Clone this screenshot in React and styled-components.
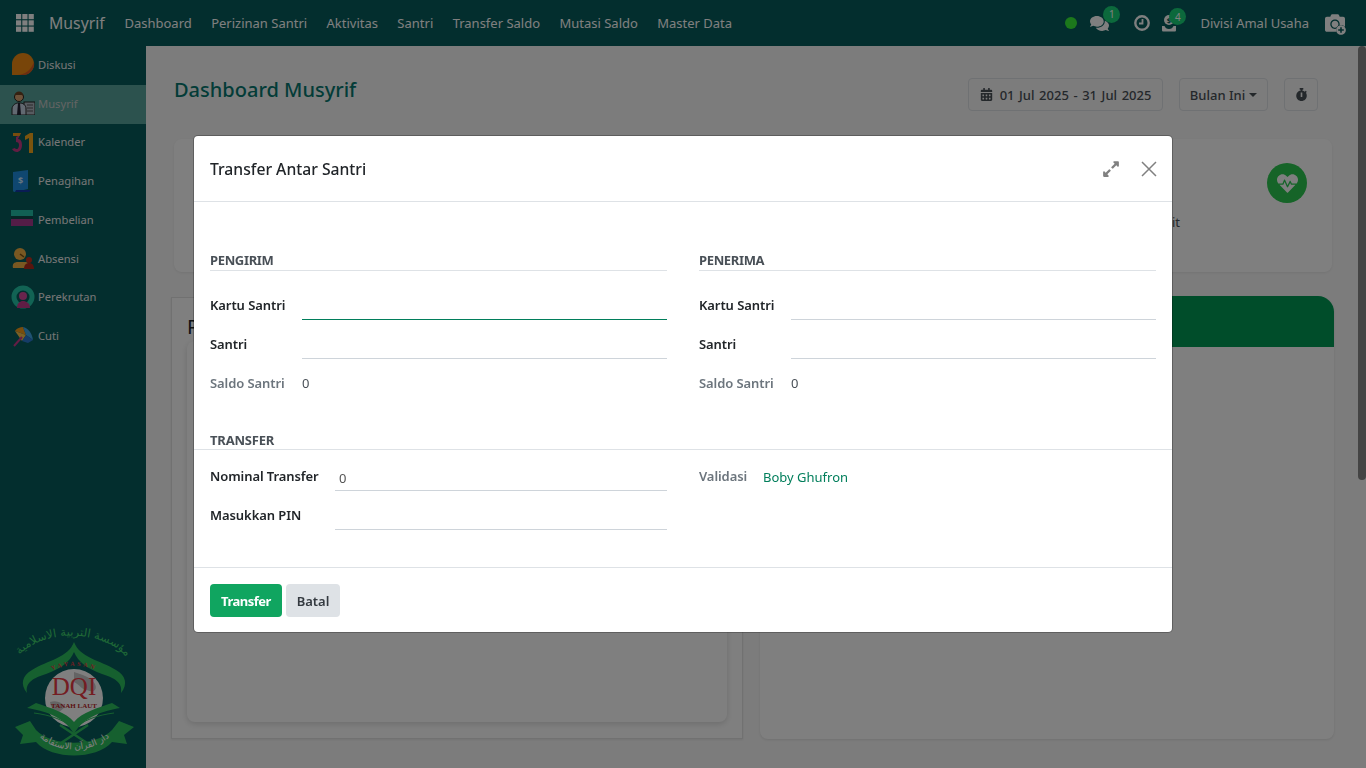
import React from 'react';
import styled, { createGlobalStyle } from 'styled-components';
import { FaComments, FaCamera, FaCalendarAlt, FaStopwatch, FaHeartbeat, FaExpandAlt, FaPlusCircle } from 'react-icons/fa';

const Global = createGlobalStyle`
  html, body { margin: 0; padding: 0; height: 100%; overflow: hidden; }
  body { font-family: "Noto Sans", "Open Sans", sans-serif; font-size: 13px; color: #212529; background: #f9f9f9; }
  * { box-sizing: border-box; }
`;
const Shell = styled.div`display: flex; flex-direction: column; height: 100vh;`;
const Navbar = styled.header`
  height: 46px; flex: none; background: #065c5c; color: #fff; display: flex; align-items: center; padding: 0 21px 0 16px;
`;
const Brand = styled.span`font-size: 15.8px; margin: 0 10px 0 15px;`;
const NavLink = styled.a`font-size: 13px; padding: 0 9.7px; color: #fff;`;
const NavRight = styled.div`margin-left: auto; display: flex; align-items: center; color: #fff;`;
const Dot = styled.span`width: 12px; height: 12px; border-radius: 50%; background: #38f038; margin-right: 13px;`;
const IconBadge = styled.span`
  position: relative; display: flex; margin-right: ${p => p.$mr}px; font-size: ${p => p.$size || 18}px;
`;
const Badge = styled.span`
  position: absolute; top: ${p => p.$top}px; left: ${p => p.$left}px; width: 17px; height: 17px; border-radius: 50%;
  background: #18d278; color: #fff; font-size: 10px; display: flex; align-items: center; justify-content: center;
`;
const Division = styled.span`font-size: 13px; margin-right: 16px;`;
const CameraWrap = styled.span`position: relative; display: flex; font-size: 20px;`;
const PlusMark = styled.span`
  position: absolute; right: -1px; bottom: -2px; display: flex; font-size: 10px; color: #fff;
  background: #065c5c; border-radius: 50%;
`;
const Below = styled.div`flex: 1; display: flex; min-height: 0;`;
const Sidebar = styled.aside`width: 146px; flex: none; background: #065c5c; display: flex; flex-direction: column;`;
const SideItem = styled.a`
  height: 38.75px; flex: none; display: flex; align-items: center; padding: 0 0 2px 11px; gap: 3px;
  font-size: 11.2px; color: #ececec; background: ${p => p.$active ? '#58a59c' : 'transparent'};
  ${p => p.$active ? 'color:#c8c8c8;' : ''}
`;
const SideIcon = styled.svg`width: 24px; height: 24px; flex: none;`;
const Logo = styled.svg`width: 146px; height: 158px; margin-top: auto; flex: none;`;
const Main = styled.main`flex: 1; min-width: 0; overflow: hidden;`;
const ScrollTrack = styled.div`width: 8px; flex: none; background: #f9f9f9;`;
const ScrollThumb = styled.div`height: 434px; background: #888; border-radius: 4px;`;
const Content = styled.div`padding: 32px 24px 0 25px;`;
const TopRow = styled.div`display: flex; align-items: center; height: 33px; padding: 0 16px 0 3px; margin-bottom: 28px;`;
const PageTitle = styled.h1`flex: 1; margin: 0 0 10px; font-size: 20px; font-weight: 500; color: #067870;`;
const ToolBtn = styled.button`
  height: 33px; padding: 0; margin-left: ${p => p.$ml || 0}px; display: flex; align-items: center; justify-content: center; gap: ${p => p.$gap || 4}px;
  border: 1px solid #dee2e6; border-radius: 4px; background: transparent; font: 500 13px "Noto Sans", sans-serif; color: #495057;
  white-space: nowrap; word-spacing: ${p => p.$ws || 0}px; width: ${p => p.$w}px; flex: none;
`;
const Caret = styled.span`width: 0; height: 0; border: 4px solid transparent; border-top-color: #495057; border-bottom: 0;`;
const SummaryCard = styled.section`
  height: 133px; margin: 0 2px 0 3px; background: #fff; border-radius: 8px; box-shadow: 0 1px 3px rgba(0,0,0,.08);
  display: flex; justify-content: flex-end; padding: 24px 25px 0 0; position: relative;
`;
const HeartCircle = styled.span`
  width: 40px; height: 40px; border-radius: 50%; background: #2cc850; color: #fff; display: flex; align-items: center; justify-content: center; font-size: 21px;
`;
const SummaryText = styled.span`position: absolute; right: 152px; top: 74px; font-size: 13px; color: #495057;`;
const Panels = styled.div`display: grid; grid-template-columns: 572px 574px; gap: 17px; margin-top: 24px;`;
const LeftPanel = styled.section`
  height: 442px; margin-top: 1px; border: 1px solid #e2e2e2; background: #fff; padding: 15px; box-shadow: 0 1px 2px rgba(0,0,0,.08);
`;
const PanelHeading = styled.h2`margin: 0; font-size: 20px; font-weight: 400; line-height: 28px; color: #212529;`;
const InnerCard = styled.div`height: 381px; background: #fff; border-radius: 8px; box-shadow: 0 2px 6px rgba(0,0,0,.15);`;
const RightPanel = styled.section`
  height: 443px; background: #fff; border-radius: 16px 16px 8px 8px; box-shadow: 0 1px 3px rgba(0,0,0,.1); overflow: hidden;
`;
const GreenHead = styled.div`height: 51px; background: #009a55;`;
const Overlay = styled.div`
  position: fixed; inset: 0; background: rgba(0,0,0,.5); display: flex; justify-content: center; align-items: flex-start; padding-top: 136px;
`;
const Modal = styled.div`
  width: 978px; background: #fff; border-radius: 4px; box-shadow: 0 0 0 1px rgba(0,0,0,.25); display: flex; flex-direction: column;
`;
const ModalHead = styled.div`
  height: 66px; display: flex; align-items: center; padding: 0 15px 0 16px; border-bottom: 1px solid #dee2e6;
`;
const ModalTitle = styled.h4`flex: 1; margin: 0; font-size: 15.7px; font-weight: 500; color: #212529;`;
const HeadBtn = styled.span`display: flex; color: #808080; margin-left: ${p => p.$ml || 0}px; font-size: 18px;`;
const Body = styled.div`height: 365px; padding: 47px 16px 0;`;
const Columns = styled.div`display: grid; grid-template-columns: 1fr 1fr; gap: 32px;`;
const SectionTitle = styled.div`
  font-size: 13px; font-weight: 700; letter-spacing: -.35px; color: #495057; line-height: 18px; height: 22px; padding-top: 2px; border-bottom: 1px solid #dee2e6; margin-bottom: 16px;
`;
const Row = styled.div`display: grid; grid-template-columns: ${p => p.$label}px 1fr; height: 39px; align-items: start;`;
const Label = styled.label`display: block; font-size: 13px; font-weight: 600; letter-spacing: -.08px; line-height: 20px; padding-top: 8px; color: ${p => p.$muted ? '#6c757d' : '#212529'};`;
const Field = styled.div`
  height: 33px; font-size: 13px; line-height: 20px; padding: 10px 4px 0; color: #555; border-bottom: 1px solid ${p => p.$focus ? '#017e5b' : '#ced4da'};
`;
const Value = styled.div`font-size: 13px; line-height: 20px; padding-top: ${p => p.$green ? 9 : 8}px; color: ${p => p.$green ? '#017e5b' : '#495057'};`;
const TransferTitle = styled.div`
  margin: 27px -16px 8px; padding: 0 16px; height: 19px; line-height: 18px; font-size: 13px; font-weight: 700; letter-spacing: -.2px; color: #495057; border-bottom: 1px solid #dee2e6;
`;
const Footer = styled.div`height: 65px; border-top: 1px solid #dee2e6; padding: 16px; display: flex; gap: 4px;`;
const Btn = styled.button`
  height: 33px; width: ${p => p.$w}px; padding: 0; border: 0; border-radius: 4px; font: ${p => p.$primary ? 700 : 600} 13px "Noto Sans", sans-serif;
  letter-spacing: ${p => p.$primary ? '-.5px' : '0'};
  background: ${p => p.$primary ? '#10a560' : '#dee2e6'}; color: ${p => p.$primary ? '#fff' : '#343a40'};
`;

const Grid3 = () => (
  <svg width="18" height="18" viewBox="0 0 18 18" fill="#fff">
    {[0, 6.3, 12.6].flatMap(y => [0, 6.3, 12.6].map(x => <rect key={`${x}-${y}`} x={x} y={y} width="5.2" height="5.2" />))}
  </svg>
);
const ClockRing = () => (
  <svg width="16" height="16" viewBox="0 0 16 16" fill="none" stroke="#fff">
    <circle cx="8" cy="8" r="6.700" strokeWidth="2.400" />
    <path d="M8.500 4v4.500H5" strokeWidth="1.800" />
  </svg>
);
const Payout = () => (
  <svg width="16" height="18" viewBox="0 0 16 18" fill="#fff">
    <circle cx="8" cy="6" r="5" /><text x="8" y="9" fontSize="7.500" textAnchor="middle" fontWeight="700" fill="#065c5c" fontFamily="Noto Sans">$</text>
    <path d="M1 12h2.500c1 2 2 3 4.500 3s3.500-1 4.500-3H15v4c0 1-.5 1.500-1.500 1.500h-11C1.500 17.500 1 17 1 16z" />
  </svg>
);
const icons = {
  diskusi: <><path d="M1 23V12a11 11 0 1 1 11 11z" fill="#f08a12" /><path d="M6 23c8 0 14-5 17-13a11 11 0 0 1-11 13z" fill="#d85a22" /></>,
  musyrif: <><rect x="13" y="11" width="11" height="13" fill="#aeb6c0" stroke="#222" /><path d="M1 24v-6c0-4 4-6 6-6h2c3 0 6 2 6 6v6z" fill="#c5d2e2" stroke="#222" /><path d="M7 12h2l1 12H6z" fill="#223" /><circle cx="8" cy="6" r="4.500" fill="#d9a273" stroke="#222" /><path d="M3.500 5c0-6 9-6 9 0l-2-1H5z" fill="#6b4322" /><path d="M16 14h6M16 17h6M16 20h6" stroke="#555" /></>,
  kalender: <><path d="M2 3h8l-3 6c3 0 4 3 4 6 0 5-3 7-5 7s-4-1-5-3l3-1c.5 1 1 1 2 1s2-2 2-4-1-3-3-3V7l2-1H2z" fill="#c83a86" /><path d="M2 3h8l-1.500 3H2z" fill="#f09a1c" /><path d="M14 6l5-3h3v20h-4V8l-4 2z" fill="#f6a91d" /></>,
  penagihan: <><path d="M2 3l15-2v19l-13 3c-2 0-2-1-2-2z" fill="#1f8fe0" /><path d="M5 21h15l-2 2H4z" fill="#1238a8" /><text x="9.500" y="15" fontSize="9" textAnchor="middle" fill="#cfe9ff" fontWeight="700" fontFamily="Noto Sans">$</text></>,
  pembelian: <><rect y="3" width="22" height="6" fill="#22c0a8" /><rect y="9" width="22" height="3" fill="#0d4a4a" /><rect y="12" width="22" height="7" fill="#a83a8e" /></>,
  absensi: <><circle cx="9" cy="8" r="6" fill="#f2b144" /><path d="M9 8l4 3" stroke="#7a4d12" strokeWidth="1.500" /><path d="M2 22c-1-4 1-6 5-6h8c2 0 3 2 3 6z" fill="#f2b144" /><circle cx="18" cy="14" r="3" fill="#c5301f" /><path d="M13 23c0-4 2-6 5-6s5 2 5 6z" fill="#b02a1c" /></>,
  perekrutan: <><circle cx="12" cy="12" r="9" fill="none" stroke="#24c7a8" strokeWidth="5" /><circle cx="12" cy="11" r="4" fill="#d34a9a" /><path d="M6 23c0-5 3-7 6-7s7 2 7 7z" fill="#c13a8a" /></>,
  cuti: <><path d="M4 7C6 4 9 3 12 3l3 8z" fill="#f29a1a" /><path d="M12 3c5 1 9 6 10 13l-7-5z" fill="#3fa6e8" /><path d="M4 7l11 4-4 6z" fill="#f6c04a" /><path d="M15 11l7 5-5 3-6-2z" fill="#2a78d0" /><path d="M11 13L3 22" stroke="#c83a8a" strokeWidth="2" /></>,
};
const menu = [
  ['Diskusi', 'diskusi'], ['Musyrif', 'musyrif', true], ['Kalender', 'kalender'], ['Penagihan', 'penagihan'],
  ['Pembelian', 'pembelian'], ['Absensi', 'absensi'], ['Perekrutan', 'perekrutan'], ['Cuti', 'cuti'],
];

const DqiLogo = () => (
  <Logo viewBox="0 0 146 158">
    <defs>
      <path id="arcTop" d="M17 48 C40 18 105 18 129 50" />
      <path id="arcYay" d="M46 64 C60 53 88 53 102 64" />
      <path id="arcRib" d="M35 123 C55 145 92 145 114 123" />
    </defs>
    <text fontFamily="DejaVu Sans" fontSize="11.500" fill="#3fd16d"><textPath href="#arcTop" startOffset="50%" textAnchor="middle">مؤسسة التربية الاسلامية</textPath></text>
    <path d="M74 32C68 48 48 50 32 60C22 66 20 74 27 83C25 72 34 68 46 64C60 59 70 52 74 42C78 52 88 59 102 64C114 68 123 72 121 83C128 74 126 66 116 60C100 50 80 48 74 32Z" fill="#2cc15f" />
    <text fontFamily="Liberation Serif" fontSize="6" fontWeight="700" letterSpacing="2.500" fill="#e83a44"><textPath href="#arcYay" startOffset="50%" textAnchor="middle">YAYASAN</textPath></text>
    <circle cx="74" cy="88" r="29" fill="#fff" />
    <path d="M74 62c8 3 16 4 21 12 3 7-3 9-8 6-5 0-7-5-13-8zM50 92c6-2 12 0 15 5l-8 7c-4-3-6-7-7-12z" fill="#c8c8c8" />
    <text x="74" y="85" textAnchor="middle" fontFamily="Liberation Serif" fontSize="25" fill="#e83a44">DQI</text>
    <text x="74" y="98" textAnchor="middle" fontFamily="Liberation Serif" fontSize="7" fontWeight="700" fill="#b81e28">TANAH LAUT</text>
    <path d="M27 98L36 93C50 98 66 102 74 112C82 102 98 98 112 93L120 98C104 101 84 106 74 124C64 106 44 101 27 98Z" fill="#2cc15f" />
    <path d="M34 103C50 105 66 110 74 120C82 110 98 105 114 103" fill="none" stroke="#2cc15f" />
    <path d="M60 115L90 135M88 115L58 135" stroke="#2cc15f" strokeWidth="2.500" />
    <path d="M15 117L30 111L36 120C52 137 96 137 112 120L119 111L134 117L124 125L127 134L112 132C96 150 52 150 36 132L20 134L23 125Z" fill="#2cc15f" />
    <text fontFamily="DejaVu Sans" fontSize="9" fill="#fff"><textPath href="#arcRib" startOffset="50%" textAnchor="middle">دار القرآن الاستقامة</textPath></text>
  </Logo>
);

export default function App() {
  return (
    <Shell>
      <Global />
      <Navbar>
        <Grid3 />
        <Brand>Musyrif</Brand>
        {['Dashboard', 'Perizinan Santri', 'Aktivitas', 'Santri', 'Transfer Saldo', 'Mutasi Saldo', 'Master Data'].map(t => <NavLink key={t}>{t}</NavLink>)}
        <NavRight>
          <Dot />
          <IconBadge $mr={25} $size={19}><FaComments /><Badge $left={13} $top={-8}>1</Badge></IconBadge>
          <IconBadge $mr={11}><ClockRing /></IconBadge>
          <IconBadge $mr={23}><Payout /><Badge $left={8} $top={-6}>4</Badge></IconBadge>
          <Division>Divisi Amal Usaha</Division>
          <CameraWrap><FaCamera /><PlusMark><FaPlusCircle /></PlusMark></CameraWrap>
        </NavRight>
      </Navbar>
      <Below>
        <Sidebar>
          {menu.map(([t, k, a]) => (
            <SideItem key={t} $active={a}><SideIcon viewBox="0 0 24 24">{icons[k]}</SideIcon>{t}</SideItem>
          ))}
          <DqiLogo />
        </Sidebar>
        <Main>
          <Content>
            <TopRow>
              <PageTitle>Dashboard Musyrif</PageTitle>
              <ToolBtn $gap={7} $ws={1.2} $w={195}><FaCalendarAlt />01 Jul 2025 - 31 Jul 2025</ToolBtn>
              <ToolBtn $ml={16} $w={89}>Bulan Ini<Caret /></ToolBtn>
              <ToolBtn $ml={16} $w={34}><FaStopwatch /></ToolBtn>
            </TopRow>
            <SummaryCard>
              <SummaryText>Saldo Kredit</SummaryText>
              <HeartCircle><FaHeartbeat /></HeartCircle>
            </SummaryCard>
            <Panels>
              <LeftPanel>
                <PanelHeading>Perizinan</PanelHeading>
                <InnerCard />
              </LeftPanel>
              <RightPanel><GreenHead /></RightPanel>
            </Panels>
          </Content>
        </Main>
        <ScrollTrack><ScrollThumb /></ScrollTrack>
      </Below>
      <Overlay>
        <Modal>
          <ModalHead>
            <ModalTitle>Transfer Antar Santri</ModalTitle>
            <HeadBtn><FaExpandAlt /></HeadBtn>
            <HeadBtn $ml={21}>
              <svg width="16" height="16" viewBox="0 0 16 16" stroke="currentColor" strokeWidth="1.500"><path d="M1 1l14 14M15 1L1 15" /></svg>
            </HeadBtn>
          </ModalHead>
          <Body>
            <Columns>
              <div>
                <SectionTitle>PENGIRIM</SectionTitle>
                <Row $label={92}><Label>Kartu Santri</Label><Field $focus /></Row>
                <Row $label={92}><Label>Santri</Label><Field /></Row>
                <Row $label={92}><Label $muted>Saldo Santri</Label><Value>0</Value></Row>
              </div>
              <div>
                <SectionTitle>PENERIMA</SectionTitle>
                <Row $label={92}><Label>Kartu Santri</Label><Field /></Row>
                <Row $label={92}><Label>Santri</Label><Field /></Row>
                <Row $label={92}><Label $muted>Saldo Santri</Label><Value>0</Value></Row>
              </div>
            </Columns>
            <TransferTitle>TRANSFER</TransferTitle>
            <Columns>
              <div>
                <Row $label={125}><Label>Nominal Transfer</Label><Field>0</Field></Row>
                <Row $label={125}><Label>Masukkan PIN</Label><Field /></Row>
              </div>
              <div>
                <Row $label={64}><Label $muted>Validasi</Label><Value $green>Boby Ghufron</Value></Row>
              </div>
            </Columns>
          </Body>
          <Footer>
            <Btn $primary $w={72}>Transfer</Btn>
            <Btn $w={54}>Batal</Btn>
          </Footer>
        </Modal>
      </Overlay>
    </Shell>
  );
}
